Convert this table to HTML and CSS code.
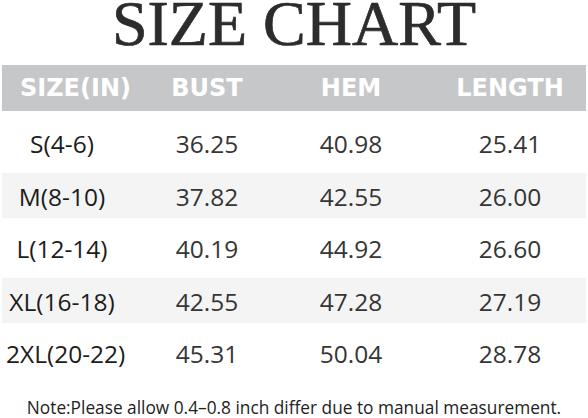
FILE: index.html
```html
<!DOCTYPE html>
<html>
<head>
<meta charset="utf-8">
<link rel="stylesheet" href="styles.css">
</head>
<body>
<div class="page">
  <h1 class="title">SIZE CHART</h1>
  <div class="chart">
    <div class="row head">
      <div class="cell c1">SIZE(IN)</div>
      <div class="cell c2">BUST</div>
      <div class="cell c3">HEM</div>
      <div class="cell c4">LENGTH</div>
    </div>
    <div class="body">
      <div class="row item">
        <div class="band">
          <div class="cell c1 label">S(4-6)</div>
          <div class="cell c2">36.25</div>
          <div class="cell c3">40.98</div>
          <div class="cell c4">25.41</div>
        </div>
      </div>
      <div class="row item alt">
        <div class="band">
          <div class="cell c1 label">M(8-10)</div>
          <div class="cell c2">37.82</div>
          <div class="cell c3">42.55</div>
          <div class="cell c4">26.00</div>
        </div>
      </div>
      <div class="row item">
        <div class="band">
          <div class="cell c1 label">L(12-14)</div>
          <div class="cell c2">40.19</div>
          <div class="cell c3">44.92</div>
          <div class="cell c4">26.60</div>
        </div>
      </div>
      <div class="row item alt">
        <div class="band">
          <div class="cell c1 label">XL(16-18)</div>
          <div class="cell c2">42.55</div>
          <div class="cell c3">47.28</div>
          <div class="cell c4">27.19</div>
        </div>
      </div>
      <div class="row item">
        <div class="band">
          <div class="cell c1 label">2XL(20-22)</div>
          <div class="cell c2">45.31</div>
          <div class="cell c3">50.04</div>
          <div class="cell c4">28.78</div>
        </div>
      </div>
    </div>
  </div>
  <p class="note">Note:Please allow 0.4–0.8 inch differ due to manual measurement.</p>
</div>
</body>
</html>
```
FILE: styles.css
```css
html, body {
  margin: 0;
  padding: 0;
  background: #ffffff;
}

.page {
  width: 588px;
  height: 418px;
  overflow: hidden;
}

.title {
  margin: 0 0 17px 0;
  height: 48px;
  line-height: 48px;
  text-align: center;
  font-family: "Liberation Serif", "Times New Roman", serif;
  font-weight: 400;
  font-size: 64px;
  color: #2c2c2c;
  -webkit-text-stroke: 0.7px #2c2c2c;
  white-space: nowrap;
}

.chart {
  margin: 0 2px;
  width: 584px;
}

.row.head,
.band {
  display: grid;
  grid-template-columns: 116px 178px 110px 180px;
  align-items: center;
}

.row.head {
  height: 46px;
  background: #c6c7c9;
  color: #ffffff;
  font-family: "DejaVu Sans", sans-serif;
  font-weight: 700;
  font-size: 24px;
}

.cell {
  text-align: center;
  white-space: nowrap;
}

.c1 {
  padding-left: 4px;
}

.head .c1 {
  padding-left: 18px;
  text-align: left;
}

.c4 {
  padding-left: 28px;
}

.body {
  padding-top: 7px;
}

.row.item {
  height: 52.5px;
  padding: 2px 0 5px 0;
  box-sizing: border-box;
  font-family: "Open Sans", "Noto Sans", sans-serif;
  font-size: 24.5px;
  color: #353535;
}

.band {
  height: 100%;
  padding-top: 2px;
  box-sizing: border-box;
}

.alt .band {
  background: #f4f4f4;
}

.label {
  color: #1c1c1c;
}

.note {
  margin: 17px 0 0 0;
  line-height: 20px;
  text-align: center;
  font-family: "Open Sans", "Noto Sans", sans-serif;
  font-size: 17.3px;
  color: #222222;
  white-space: nowrap;
}
```
